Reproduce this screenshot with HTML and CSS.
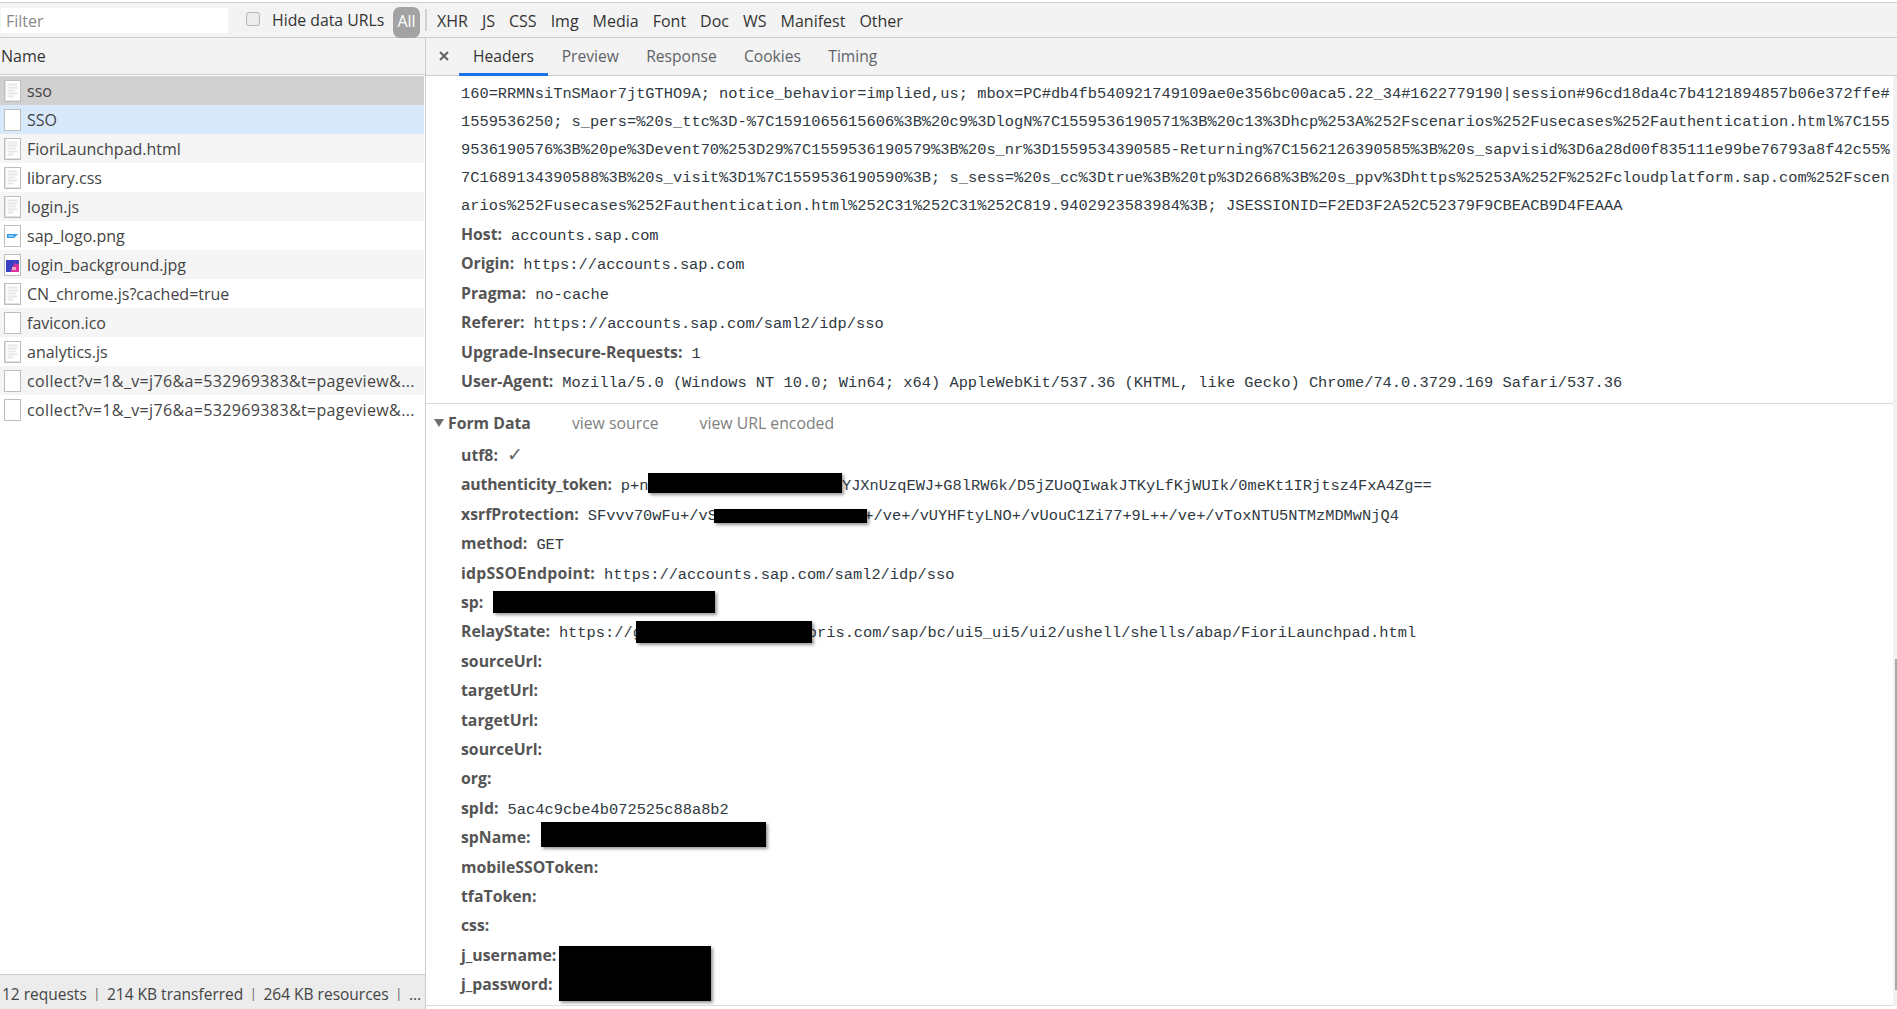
FILE: index.html
```html
<!DOCTYPE html>
<html lang="en">
<head>
<meta charset="utf-8">
<title>Network</title>
<link rel="stylesheet" href="styles.css">
</head>
<body>
<svg class="defs" width="0" height="0" aria-hidden="true">
  <symbol id="doc" viewBox="0 0 17 22">
    <rect x="0.5" y="0.5" width="16" height="21" fill="#fff" stroke="#bdbdbd"/>
    <path d="M1.5 1.5V20.5H15.5" fill="none" stroke="#e0e0e0"/>
    <path d="M3.5 4.5h10M3.5 7.5h10M3.5 10.5h8M3.5 13.5h10M3.5 16.5h6" stroke="#e8e8e8" stroke-width="2" fill="none"/>
  </symbol>
  <symbol id="blank" viewBox="0 0 17 22">
    <rect x="0.5" y="0.5" width="16" height="21" fill="#fff" stroke="#bdbdbd"/>
  </symbol>
  <symbol id="logo" viewBox="0 0 17 22">
    <rect x="0.5" y="0.5" width="16" height="21" fill="#fff" stroke="#bdbdbd"/>
    <path d="M3 9H14L10 13H3Z" fill="#2f9be8"/>
    <path d="M4.5 11h5" stroke="#fff"/>
  </symbol>
  <symbol id="photo" viewBox="0 0 17 22">
    <rect x="0.5" y="0.5" width="16" height="21" fill="#fff" stroke="#bdbdbd"/>
    <rect x="2" y="6" width="13" height="12" fill="#3c3fc4"/>
    <path d="M7 16L11 9L15 11V18H7Z" fill="#e0329c"/>
    <rect x="8" y="13" width="4" height="3" fill="#f2a2c0"/>
  </symbol>
</svg>

<div class="app">
  <header class="toolbar">
    <div class="filter">Filter</div>
    <span class="check"></span>
    <span class="hide">Hide data URLs</span>
    <span class="pill">All</span>
    <span class="sep"></span>
    <nav class="types">
      <span>XHR</span><span>JS</span><span>CSS</span><span>Img</span><span>Media</span><span>Font</span><span>Doc</span><span>WS</span><span>Manifest</span><span>Other</span>
    </nav>
  </header>

  <div class="main">
    <aside class="left">
      <div class="name-head">Name</div>
      <ul class="rows">
        <li class="row sel"><svg class="ic"><use href="#doc"/></svg>sso</li>
        <li class="row blue"><svg class="ic"><use href="#blank"/></svg>SSO</li>
        <li class="row alt"><svg class="ic"><use href="#doc"/></svg>FioriLaunchpad.html</li>
        <li class="row"><svg class="ic"><use href="#doc"/></svg>library.css</li>
        <li class="row alt"><svg class="ic"><use href="#doc"/></svg>login.js</li>
        <li class="row"><svg class="ic"><use href="#logo"/></svg>sap_logo.png</li>
        <li class="row alt"><svg class="ic"><use href="#photo"/></svg>login_background.jpg</li>
        <li class="row"><svg class="ic"><use href="#doc"/></svg>CN_chrome.js?cached=true</li>
        <li class="row alt"><svg class="ic"><use href="#blank"/></svg>favicon.ico</li>
        <li class="row"><svg class="ic"><use href="#doc"/></svg>analytics.js</li>
        <li class="row alt wide"><svg class="ic"><use href="#blank"/></svg>collect?v=1&amp;_v=j76&amp;a=532969383&amp;t=pageview&amp;...</li>
        <li class="row wide"><svg class="ic"><use href="#blank"/></svg>collect?v=1&amp;_v=j76&amp;a=532969383&amp;t=pageview&amp;...</li>
      </ul>
      <footer class="status">12 requests<i>|</i>214 KB transferred<i>|</i>264 KB resources<i>|</i>...</footer>
    </aside>

    <section class="right">
      <div class="tabs">
        <svg class="close" width="12" height="12" viewBox="0 0 12 12"><path d="M2 2L10 10M10 2L2 10" stroke="#5f6368" stroke-width="2"/></svg>
        <span class="tab on">Headers</span><span class="tab">Preview</span><span class="tab">Response</span><span class="tab">Cookies</span><span class="tab">Timing</span>
      </div>
      <div class="scroll">
        <div class="body">
          <div class="wrap">160=RRMNsiTnSMaor7jtGTHO9A; notice_behavior=implied,us; mbox=PC#db4fb540921749109ae0e356bc00aca5.22_34#1622779190|session#96cd18da4c7b4121894857b06e372ffe#</div>
          <div class="wrap">1559536250; s_pers=%20s_ttc%3D-%7C1591065615606%3B%20c9%3DlogN%7C1559536190571%3B%20c13%3Dhcp%253A%252Fscenarios%252Fusecases%252Fauthentication.html%7C155</div>
          <div class="wrap">9536190576%3B%20pe%3Devent70%253D29%7C1559536190579%3B%20s_nr%3D1559534390585-Returning%7C1562126390585%3B%20s_sapvisid%3D6a28d00f835111e99be76793a8f42c55%</div>
          <div class="wrap">7C1689134390588%3B%20s_visit%3D1%7C1559536190590%3B; s_sess=%20s_cc%3Dtrue%3B%20tp%3D2668%3B%20s_ppv%3Dhttps%25253A%252F%252Fcloudplatform.sap.com%252Fscen</div>
          <div class="wrap">arios%252Fusecases%252Fauthentication.html%252C31%252C31%252C819.9402923583984%3B; JSESSIONID=F2ED3F2A52C52379F9CBEACB9D4FEAAA</div>
          <div class="kv"><b>Host:</b><code>accounts.sap.com</code></div>
          <div class="kv"><b>Origin:</b><code>https://accounts.sap.com</code></div>
          <div class="kv"><b>Pragma:</b><code>no-cache</code></div>
          <div class="kv"><b>Referer:</b><code>https://accounts.sap.com/saml2/idp/sso</code></div>
          <div class="kv"><b>Upgrade-Insecure-Requests:</b><code>1</code></div>
          <div class="kv"><b>User-Agent:</b><code>Mozilla/5.0 (Windows NT 10.0; Win64; x64) AppleWebKit/537.36 (KHTML, like Gecko) Chrome/74.0.3729.169 Safari/537.36</code></div>

          <div class="form-head">
            <span class="tri"></span><b>Form Data</b>
            <span class="link">view source</span><span class="link">view URL encoded</span>
          </div>
          <div class="kv"><b>utf8:</b><code class="tick">✓</code></div>
          <div class="kv"><b class="tight">authenticity_token:</b><code>p+n                     YJXnUzqEWJ+G8lRW6k/D5jZUoQIwakJTKyLfKjWUIk/0meKt1IRjtsz4FxA4Zg==</code></div>
          <div class="kv"><b>xsrfProtection:</b><code>SFvvv70wFu+/vS                +/ve+/vUYHFtyLNO+/vUouC1Zi77+9L++/ve+/vToxNTU5NTMzMDMwNjQ4</code></div>
          <div class="kv"><b>method:</b><code>GET</code></div>
          <div class="kv"><b class="loose">idpSSOEndpoint:</b><code>https://accounts.sap.com/saml2/idp/sso</code></div>
          <div class="kv"><b>sp:</b></div>
          <div class="kv"><b>RelayState:</b><code>https://g                  oris.com/sap/bc/ui5_ui5/ui2/ushell/shells/abap/FioriLaunchpad.html</code></div>
          <div class="kv"><b>sourceUrl:</b></div>
          <div class="kv"><b>targetUrl:</b></div>
          <div class="kv"><b>targetUrl:</b></div>
          <div class="kv"><b>sourceUrl:</b></div>
          <div class="kv"><b>org:</b></div>
          <div class="kv"><b>spId:</b><code>5ac4c9cbe4b072525c88a8b2</code></div>
          <div class="kv"><b>spName:</b></div>
          <div class="kv"><b>mobileSSOToken:</b></div>
          <div class="kv"><b>tfaToken:</b></div>
          <div class="kv"><b>css:</b></div>
          <div class="kv"><b>j_username:</b></div>
          <div class="kv"><b>j_password:</b></div>
        </div>
        <span class="redact r-auth"></span>
        <span class="redact r-xsrf"></span>
        <span class="redact r-sp"></span>
        <span class="redact r-relay"></span>
        <span class="redact r-name"></span>
        <span class="redact r-user"></span>
        <div class="track"><div class="thumb"></div></div>
      </div>
    </section>
  </div>
</div>
</body>
</html>
```

FILE: styles.css
```css
* { box-sizing: border-box; }
html, body { margin: 0; height: 100%; overflow: hidden; background: #fff; }
body { font-family: "Open Sans", "Noto Sans", sans-serif; font-size: 16px; color: #333; }
.defs { position: absolute; }

.app { height: 1009px; display: flex; flex-direction: column; padding-top: 2px; }

.toolbar {
  height: 36px; display: flex; align-items: center; flex: none;
  background: #f3f3f3; border-top: 1px solid #cfcfcf; border-bottom: 1px solid #cccccc;
  color: #333;
}
.filter {
  width: 227px; height: 25px; margin-left: 1px; padding-left: 5px;
  background: #fff; color: #8a8a8a; line-height: 27px;
}
.check {
  width: 14px; height: 14px; margin: -3px 0 0 18px; border: 1px solid #b5b5b5; border-radius: 3px; background: #ececec;
}
.hide { margin-left: 12px; width: 121px; white-space: nowrap; font-size: 15.8px; }
.pill {
  width: 27px; height: 31px; background: #a3a3a3; color: #fff; border-radius: 7px;
  text-align: center; line-height: 29px; align-self: flex-end; margin-bottom: -1px;
}
.sep { width: 2px; height: 22px; margin-left: 5px; background: #d0d0d0; }
.types { display: flex; gap: 14px; margin-left: 10px; padding-top: 2px; }

.main { flex: 1; display: flex; min-height: 0; }

.left {
  width: 426px; flex: none; display: flex; flex-direction: column;
  border-right: 1px solid #cccccc;
}
.name-head {
  height: 37px; line-height: 36px; padding-left: 1px; background: #f3f3f3;
  border-bottom: 1px solid #cccccc; flex: none; color: #333;
}
.rows { list-style: none; margin: 1px 1px 0 0; padding: 0; flex: 1; }
.row {
  height: 29px; display: flex; align-items: center; padding-left: 4px; white-space: nowrap; color: #444;
}
.row.alt { background: #f5f5f5; }
.row.sel { background: #d1d1d1; }
.row.blue { background: #d9e9fc; }
.row.wide { letter-spacing: .36px; }
.ic { width: 17px; height: 22px; margin-right: 6px; flex: none; }

.status {
  height: 35px; flex: none; display: flex; align-items: center; padding: 3px 0 0 2px; overflow: hidden;
  background: #ececec; border-top: 1px solid #cccccc; white-space: nowrap; color: #444; font-size: 15.5px;
}
.status i { font-style: normal; color: #555; margin: 0 6.8px; font-size: 12px; }

.right { flex: 1; min-width: 0; display: flex; flex-direction: column; }
.tabs {
  height: 38px; flex: none; display: flex; align-items: stretch; position: relative;
  background: #f3f3f3; border-bottom: 1px solid #cccccc; padding-left: 33px; color: #5f6368; font-size: 15.6px;
}
.close { position: absolute; left: 12px; top: 12px; }
.tab { padding: 0 13.7px; line-height: 36px; margin-bottom: -1px; }
.tab.on { color: #333; border-bottom: 3px solid #1a73e8; padding: 0 14px; }

.scroll { flex: 1; position: relative; min-height: 0; }
.body { padding: 4px 0 0 35px; }
.wrap {
  height: 28px; line-height: 28px; white-space: pre;
  font-family: "Liberation Mono", "DejaVu Sans Mono", monospace; font-size: 15.36px; color: #303942;
}
.kv { height: 29.4px; line-height: 29px; display: flex; align-items: baseline; white-space: pre; }
.kv b { font-weight: 700; color: #555; margin-right: 9px; font-size: 15.8px; }
.kv b.tight { letter-spacing: -.2px; }
.kv b.loose { letter-spacing: .25px; }
.kv code { font-family: "Liberation Mono", "DejaVu Sans Mono", monospace; font-size: 15.36px; color: #303942; }
.kv code.tick { font-family: "DejaVu Sans", sans-serif; font-size: 19px; line-height: 20px; color: #666; }
.form-head {
  height: 38px; margin: 6.75px 0 0 -35px; padding-left: 8px; display: flex; align-items: center;
  border-top: 1px solid #dcdcdc; color: #555; font-size: 15.8px;
}
.form-head b { font-weight: 700; }
.tri {
  width: 0; height: 0; margin-right: 4px;
  border-left: 5px solid transparent; border-right: 5px solid transparent; border-top: 8px solid #6e6e6e;
}
.link { color: #808080; margin-left: 41px; }

.redact { position: absolute; background: #000; box-shadow: 2px 2px 3px rgba(0,0,0,.4); }
.r-auth { left: 222px; top: 397px; width: 194px; height: 20px; }
.r-xsrf { left: 288px; top: 433px; width: 153px; height: 14px; }
.r-sp { left: 67px; top: 515px; width: 222px; height: 22px; }
.r-relay { left: 210px; top: 545px; width: 176px; height: 22px; }
.r-name { left: 115px; top: 746px; width: 225px; height: 25px; }
.r-user { left: 133px; top: 870px; width: 152px; height: 55px; }

.track { position: absolute; right: 0; top: 0; bottom: 3px; width: 4px; background: #f1f1f1; }
.thumb { position: absolute; left: 2px; right: 0; top: 583px; height: 331px; background: #a8a8a8; }
.scroll::after { content: ""; position: absolute; left: 0; right: 4px; bottom: 3px; height: 1px; background: #dcdcdc; }
```
